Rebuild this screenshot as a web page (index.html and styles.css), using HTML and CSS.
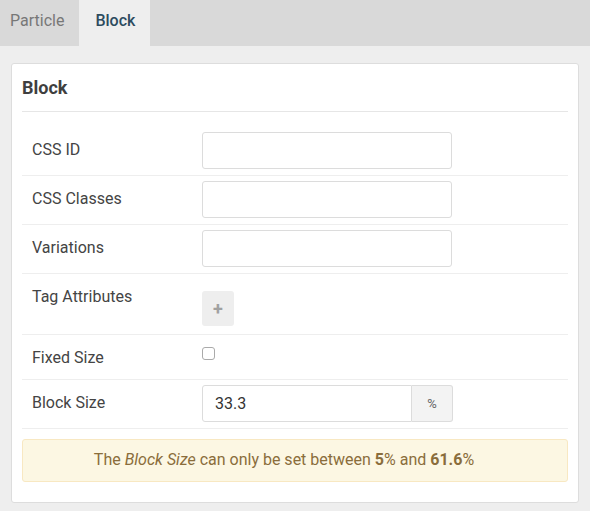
FILE: index.html
```html
<!DOCTYPE html>
<html>
<head>
<meta charset="utf-8">
<link rel="stylesheet" href="styles.css">
</head>
<body>
<div class="tabs">
  <div class="tab tab-first">Particle</div>
  <div class="tab active">Block</div>
</div>
<div class="main">
  <div class="card">
    <div class="card-title">Block</div>
    <div class="fields">
      <div class="row">
        <div class="label">CSS ID</div>
        <div class="control"><input class="text" type="text"></div>
      </div>
      <div class="row">
        <div class="label">CSS Classes</div>
        <div class="control"><input class="text" type="text"></div>
      </div>
      <div class="row">
        <div class="label">Variations</div>
        <div class="control"><input class="text" type="text"></div>
      </div>
      <div class="row">
        <div class="label">Tag Attributes</div>
        <div class="control"><button class="add">+</button></div>
      </div>
      <div class="row">
        <div class="label">Fixed Size</div>
        <div class="control"><input class="check" type="checkbox"></div>
      </div>
      <div class="row">
        <div class="label">Block Size</div>
        <div class="control">
          <div class="group">
            <input class="text size" type="text" value="33.3">
            <span class="addon">%</span>
          </div>
        </div>
      </div>
    </div>
    <div class="alert">The <em>Block Size</em> can only be set between <strong>5</strong>% and <strong>61.6</strong>%</div>
  </div>
</div>
</body>
</html>
```

FILE: styles.css
```css
html, body {
  margin: 0;
  padding: 0;
}
body {
  background: #eeeeee;
  font-family: Roboto, "Liberation Sans", sans-serif;
  font-size: 16px;
  color: #444;
}
.tabs {
  display: flex;
  height: 46px;
  background: #d9d9d9;
}
.tab {
  line-height: 42px;
  padding: 0 15px 0 16px;
  color: #777;
  font-size: 16px;
}
.tab-first {
  padding: 0 15px 0 10px;
}
.tab.active {
  background: #eeeeee;
  color: #2c4b5e;
  font-weight: 500;
}
.main {
  padding: 17px 11px 10px 11px;
}
.card {
  background: #fff;
  border: 1px solid #dddddd;
  border-radius: 3px;
  padding: 0 10px 20px 10px;
}
.card-title {
  font-size: 18px;
  font-weight: 700;
  color: #3f3f3f;
  line-height: 22px;
  padding: 13px 0 12px 0;
  border-bottom: 1px solid #e6e6e6;
}
.fields {
  padding-top: 15px;
}
.row {
  display: flex;
  padding: 5px 0 6px 0;
  border-bottom: 1px solid #eeeeee;
}
.label {
  width: 170px;
  padding: 9px 0 0 10px;
  line-height: 18px;
  color: #444;
}
.control {
  flex: 1;
}
.text {
  box-sizing: border-box;
  width: 250px;
  height: 37px;
  border: 1px solid #dcdcdc;
  border-radius: 3px;
  padding: 0 12px;
  font-family: Roboto, "Liberation Sans", sans-serif;
  font-size: 16px;
  color: #333;
  background: #fff;
  margin: 0;
  display: block;
}
.add {
  display: block;
  width: 32px;
  height: 35px;
  margin: 12px 0 2px 0;
  border: none;
  border-radius: 3px;
  background: #eeeeee;
  color: #a0a0a0;
  font-family: Roboto, "Liberation Sans", sans-serif;
  font-size: 18px;
  font-weight: 700;
  padding: 0;
  line-height: 35px;
}
.check {
  -webkit-appearance: none;
  appearance: none;
  display: block;
  width: 13px;
  height: 13px;
  margin: 7px 0 13px 0;
  border: 1px solid #aaaaaa;
  border-radius: 3px;
  background: #fff;
  box-sizing: border-box;
}
.group {
  display: flex;
  width: 251px;
}
.text.size {
  width: 210px;
  border-radius: 3px 0 0 3px;
}
.addon {
  box-sizing: border-box;
  width: 41px;
  height: 37px;
  border: 1px solid #dcdcdc;
  border-left: none;
  border-radius: 0 3px 3px 0;
  background: #f3f3f3;
  color: #666;
  font-size: 13px;
  display: flex;
  align-items: center;
  justify-content: center;
}
.alert {
  margin-top: 10px;
  background: #fcf7e3;
  border: 1px solid #f8e8c2;
  border-radius: 3px;
  color: #8a6d3b;
  text-align: center;
  font-size: 16px;
  line-height: 20px;
  padding: 10px 22px 11px 0;
}
.alert strong {
  font-weight: 700;
}
```
